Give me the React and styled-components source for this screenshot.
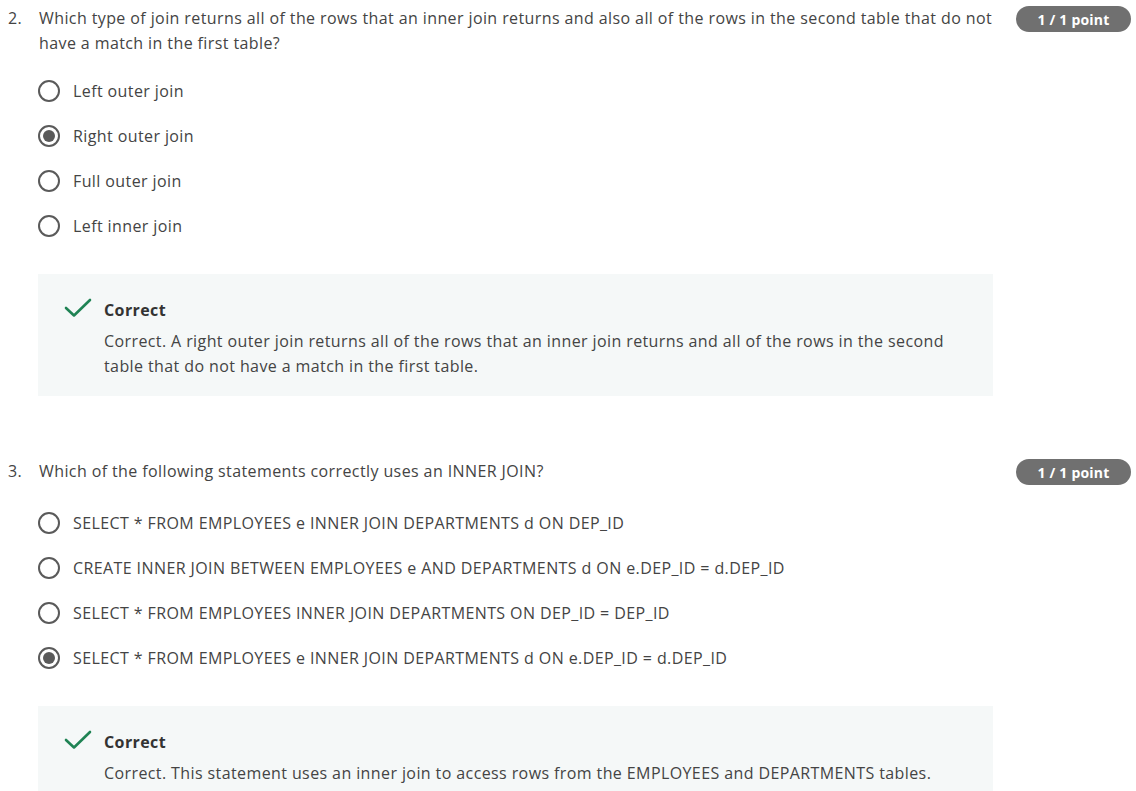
import React from 'react';
import styled, { createGlobalStyle } from 'styled-components';

const GlobalStyle = createGlobalStyle`
  body {
    margin: 0;
    background: #fff;
    font-family: "Open Sans", "Noto Sans", sans-serif;
    color: #444;
    letter-spacing: 0.4px;
  }
`;

const questions = [
  {
    num: '2.',
    text: 'Which type of join returns all of the rows that an inner join returns and also all of the rows in the second table that do not have a match in the first table?',
    options: ['Left outer join', 'Right outer join', 'Full outer join', 'Left inner join'],
    selected: 1,
    feedback:
      'Correct. A right outer join returns all of the rows that an inner join returns and all of the rows in the second table that do not have a match in the first table.',
  },
  {
    num: '3.',
    text: 'Which of the following statements correctly uses an INNER JOIN?',
    options: [
      'SELECT * FROM EMPLOYEES e INNER JOIN DEPARTMENTS d ON DEP_ID',
      'CREATE INNER JOIN BETWEEN EMPLOYEES e AND DEPARTMENTS d ON e.DEP_ID = d.DEP_ID',
      'SELECT * FROM EMPLOYEES INNER JOIN DEPARTMENTS ON DEP_ID = DEP_ID',
      'SELECT * FROM EMPLOYEES e INNER JOIN DEPARTMENTS d ON e.DEP_ID = d.DEP_ID',
    ],
    selected: 3,
    feedback:
      'Correct. This statement uses an inner join to access rows from the EMPLOYEES and DEPARTMENTS tables.',
  },
];

const Check = () => (
  <svg width="28" height="20" viewBox="0 0 28 20" fill="none">
    <path d="M2 10 L10 17.5 L26 2" stroke="#1f8354" strokeWidth="2.6" strokeLinecap="round" strokeLinejoin="round" />
  </svg>
);

const Question = ({ q }) => (
  <Block>
    <Header>
      <Num>{q.num}</Num>
      <Prompt>{q.text}</Prompt>
      <Badge>1 / 1 point</Badge>
    </Header>
    <Options>
      {q.options.map((o, i) => (
        <Option key={o}>
          <Radio $checked={i === q.selected} />
          <span>{o}</span>
        </Option>
      ))}
    </Options>
    <Feedback>
      <FeedbackHead>
        <IconSlot><Check /></IconSlot>
        <strong>Correct</strong>
      </FeedbackHead>
      <FeedbackText>{q.feedback}</FeedbackText>
    </Feedback>
  </Block>
);

export default function App() {
  return (
    <>
      <GlobalStyle />
      <Page>
        {questions.map((q) => (
          <Question key={q.num} q={q} />
        ))}
      </Page>
    </>
  );
}

const Page = styled.div`
  padding: 6px 5px 0 8px;
  display: flex;
  flex-direction: column;
  gap: 63px;
`;

const Block = styled.section`
  display: flex;
  flex-direction: column;
`;

const Header = styled.div`
  display: flex;
  align-items: flex-start;
  min-height: 29px;
  font-size: 16px;
  line-height: 25px;
`;

const Num = styled.span`
  width: 31px;
  flex-shrink: 0;
`;

const Prompt = styled.div`
  width: 960px;
  flex-shrink: 0;
`;

const Badge = styled.span`
  margin-left: auto;
  width: 115px;
  height: 26px;
  border-radius: 13px;
  background: #707070;
  color: #fff;
  font-size: 14px;
  font-weight: 700;
  letter-spacing: 0.2px;
  display: flex;
  align-items: center;
  justify-content: center;
`;

const Options = styled.div`
  margin: 12px 0 0 30px;
  display: flex;
  flex-direction: column;
`;

const Option = styled.label`
  height: 45px;
  display: flex;
  align-items: center;
  gap: 13px;
  font-size: 16px;
`;

const Radio = styled.span`
  width: 22px;
  height: 22px;
  box-sizing: border-box;
  border-radius: 50%;
  border: 2px solid #5a5a5a;
  display: flex;
  align-items: center;
  justify-content: center;
  flex-shrink: 0;

  &::after {
    content: '';
    width: 12px;
    height: 12px;
    border-radius: 50%;
    background: #5a5a5a;
    display: ${(p) => (p.$checked ? 'block' : 'none')};
  }
`;

const Feedback = styled.div`
  margin: 26px 0 0 30px;
  width: 955px;
  box-sizing: border-box;
  background: #f5f8f8;
  padding: 24px 40px 17px 26px;
`;

const FeedbackHead = styled.div`
  display: flex;
  align-items: center;
  gap: 12px;
  font-size: 16px;
  line-height: 24px;
  color: #333;
`;

const IconSlot = styled.span`
  display: flex;
  width: 28px;
  margin-top: -5px;
`;

const FeedbackText = styled.p`
  margin: 7px 0 0 40px;
  font-size: 16px;
  line-height: 25px;
`;
